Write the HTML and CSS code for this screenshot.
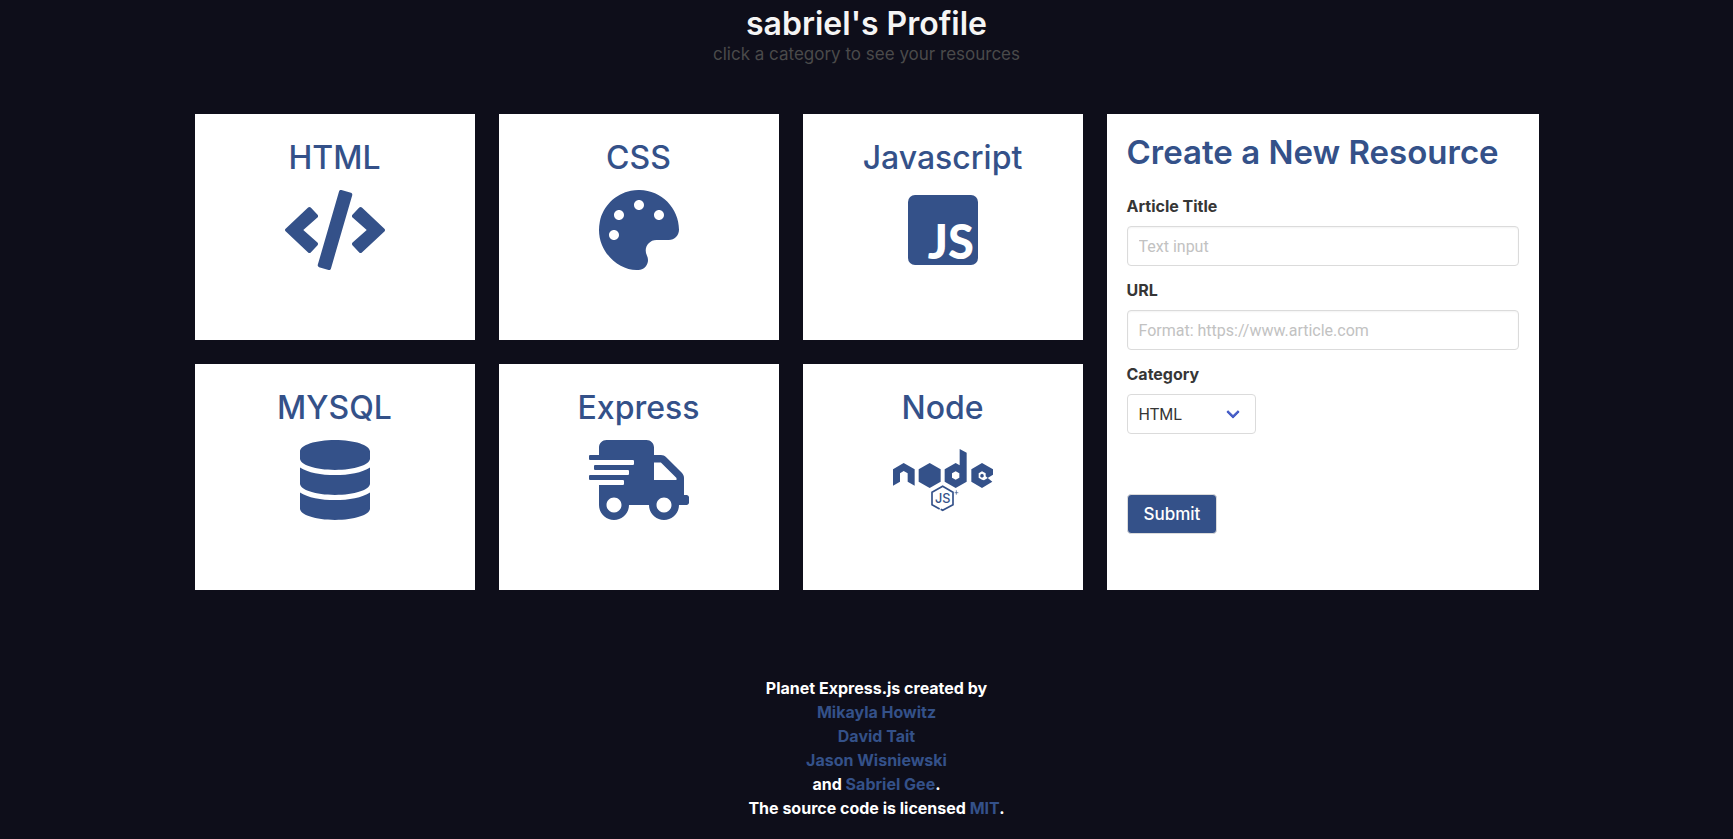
FILE: index.html
```html
<!DOCTYPE html>
<html lang="en">
<head>
<meta charset="utf-8">
<meta name="viewport" content="width=device-width, initial-scale=1">
<title>sabriel's Profile</title>
<link rel="stylesheet" href="styles.css">
</head>
<body>
<header class="hero">
  <h1 class="hero-title">sabriel's Profile</h1>
  <p class="hero-subtitle">click a category to see your resources</p>
</header>

<main class="board">
  <section class="categories">
    <a class="card" href="#html">
      <h2 class="card-title">HTML</h2>
      <svg class="icon" viewBox="0 0 640 512" aria-hidden="true"><path d="M278.9 511.500l-61-17.700c-6.400-1.800-10-8.500-8.200-14.900L346.200 8.700c1.800-6.400 8.500-10 14.900-8.200l61 17.700c6.400 1.800 10 8.500 8.200 14.900L293.800 503.300c-1.900 6.400-8.500 10.100-14.900 8.200zm-114-112.200l43.500-46.400c4.600-4.900 4.300-12.700-.8-17.200L117 256l90.600-79.700c5.100-4.500 5.500-12.300.8-17.200l-43.500-46.400c-4.500-4.800-12.100-5.100-17-.5L3.800 247.200c-5.100 4.700-5.100 12.800 0 17.500l144.100 135.100c4.900 4.600 12.500 4.400 17-.5zm327.200.6l144.100-135.100c5.100-4.700 5.100-12.800 0-17.500L492.100 112.100c-4.800-4.500-12.400-4.300-17 .5L431.600 159c-4.600 4.900-4.300 12.700.8 17.200L523 256l-90.600 79.700c-5.100 4.500-5.500 12.300-.8 17.200l43.500 46.400c4.500 4.900 12.100 5.100 17 .6z"/></svg>
    </a>
    <a class="card" href="#css">
      <h2 class="card-title">CSS</h2>
      <svg class="icon" viewBox="0 0 512 512" aria-hidden="true"><path d="M204.300 5C104.900 24.400 24.800 104.300 5.200 203.400c-37 187 131.700 326.400 258.800 306.700 41.200-6.400 61.400-54.600 42.500-91.700-23.100-45.400 9.900-98.400 60.900-98.400h79.700c35.800 0 64.800-29.600 64.900-65.300C511.500 97.100 368.100-26.900 204.300 5zM96 320c-17.700 0-32-14.300-32-32s14.300-32 32-32 32 14.300 32 32-14.300 32-32 32zm32-128c-17.700 0-32-14.300-32-32s14.300-32 32-32 32 14.300 32 32-14.300 32-32 32zm128-64c-17.700 0-32-14.300-32-32s14.300-32 32-32 32 14.300 32 32-14.300 32-32 32zm128 64c-17.700 0-32-14.300-32-32s14.300-32 32-32 32 14.300 32 32-14.300 32-32 32z"/></svg>
    </a>
    <a class="card" href="#javascript">
      <h2 class="card-title">Javascript</h2>
      <svg class="icon" viewBox="0 0 70 80" aria-hidden="true"><rect y="5" width="70" height="70" rx="7"/><text class="js-mark" x="66" y="69" text-anchor="end">JS</text></svg>
    </a>
    <a class="card" href="#mysql">
      <h2 class="card-title">MYSQL</h2>
      <svg class="icon" viewBox="0 0 448 512" aria-hidden="true"><path d="M448 73.143v45.714C448 159.143 347.667 192 224 192S0 159.143 0 118.857V73.143C0 32.857 100.333 0 224 0s224 32.857 224 73.143zM448 176v102.857C448 319.143 347.667 352 224 352S0 319.143 0 278.857V176c48.125 33.143 136.208 48.572 224 48.572S399.874 209.143 448 176zm0 160v102.857C448 479.143 347.667 512 224 512S0 479.143 0 438.857V336c48.125 33.143 136.208 48.572 224 48.572S399.874 369.143 448 336z"/></svg>
    </a>
    <a class="card" href="#express">
      <h2 class="card-title">Express</h2>
      <svg class="icon" viewBox="0 0 640 512" aria-hidden="true"><path d="M624 352h-16V243.900c0-12.700-5.100-24.900-14.100-33.900L494 110.100c-9-9-21.200-14.100-33.900-14.100H416V48c0-26.500-21.500-48-48-48H112C85.500 0 64 21.500 64 48v48H8c-4.400 0-8 3.600-8 8v16c0 4.400 3.600 8 8 8h272c4.400 0 8 3.600 8 8v16c0 4.400-3.600 8-8 8H40c-4.400 0-8 3.600-8 8v16c0 4.400 3.600 8 8 8h208c4.400 0 8 3.600 8 8v16c0 4.400-3.600 8-8 8H8c-4.400 0-8 3.600-8 8v16c0 4.400 3.600 8 8 8h208c4.400 0 8 3.600 8 8v16c0 4.400-3.600 8-8 8H64v128c0 53 43 96 96 96s96-43 96-96h128c0 53 43 96 96 96s96-43 96-96h48c8.800 0 16-7.200 16-16v-32c0-8.800-7.200-16-16-16zM160 464c-26.500 0-48-21.500-48-48s21.500-48 48-48 48 21.500 48 48-21.500 48-48 48zm320 0c-26.500 0-48-21.500-48-48s21.500-48 48-48 48 21.500 48 48-21.500 48-48 48zm80-208H416V144h44.100l99.900 99.900V256z"/></svg>
    </a>
    <a class="card" href="#node">
      <h2 class="card-title">Node</h2>
      <svg class="icon" viewBox="0 0 300 240" aria-hidden="true">
        <path d="M0 88 32 69 65 88V137L44 125V100L32 93 21 100V125L0 137Z"/>
        <path d="M110 69 143 88V125L110 144 77 125V88Z"/>
        <path fill-rule="evenodd" d="M200 27 221 38V125L188 144 155 125V88L188 69 200 76ZM188 94 177 100V113L188 119 199 113V100Z"/>
        <path fill-rule="evenodd" d="M267 69 300 88V104L273 121 267 119 257 113V100L267 94 278 100V109L298 125 267 144 235 125V88ZM267 101 262 104V110L267 113 272 110V104Z"/>
        <path class="hex-outline" d="M140 207 117 194V157L149 139 180 157V194L149 211 143 208"/>
        <path class="spark" d="M190 151V164M185 158H196"/>
        <text class="node-js" x="149" y="189" text-anchor="middle">JS</text>
      </svg>
    </a>
  </section>

  <form class="panel">
    <h2 class="panel-title">Create a New Resource</h2>
    <div class="field">
      <label class="label" for="title">Article Title</label>
      <input class="input" id="title" type="text" placeholder="Text input">
    </div>
    <div class="field">
      <label class="label" for="url">URL</label>
      <input class="input" id="url" type="text" placeholder="Format: https://www.article.com">
    </div>
    <div class="field">
      <label class="label" for="category">Category</label>
      <div class="select">
        <select id="category">
          <option>HTML</option>
          <option>CSS</option>
          <option>Javascript</option>
          <option>MYSQL</option>
          <option>Express</option>
          <option>Node</option>
        </select>
      </div>
    </div>
    <button class="button" type="submit">Submit</button>
  </form>
</main>

<footer class="footer">
  <p>Planet Express.js created by</p>
  <p><a href="#mikayla">Mikayla Howitz</a></p>
  <p><a href="#david">David Tait</a></p>
  <p><a href="#jason">Jason Wisniewski</a></p>
  <p>and <a href="#sabriel">Sabriel Gee</a>.</p>
  <p>The source code is licensed <a href="#license">MIT</a>.</p>
</footer>
</body>
</html>
```

FILE: styles.css
```css
:root {
  --blue: #345189;
  --night: #0e0e1a;
  --ink: #363636;
  --line: #dbdbdb;
}

*,
*::after { box-sizing: border-box; }

body {
  margin: 0;
  background: var(--night);
  font-family: Inter, "Open Sans", sans-serif;
  font-size: 16px;
  line-height: 24px;
}

h1, h2, p { margin: 0; }

a { color: var(--blue); text-decoration: none; }

.hero {
  padding: 6px 20px 0;
  text-align: center;
}

.hero-title {
  color: #f5f5f5;
  font-size: 32px;
  font-weight: 600;
  line-height: 36px;
}

.hero-subtitle {
  color: #4a4a4a;
  font-size: 17px;
}

.board {
  display: grid;
  grid-template-columns: 888fr 432fr;
  gap: 24px;
  max-width: 1344px;
  margin: 48px auto 0;
}

.categories {
  display: grid;
  grid-template-columns: repeat(3, 1fr);
  gap: 24px;
}

.card {
  display: flex;
  flex-direction: column;
  align-items: center;
  gap: 14px;
  min-height: 226px;
  padding: 26px 20px;
  background: #fff;
}

.card-title {
  font-size: 32px;
  font-weight: 500;
  line-height: 36px;
}

.icon {
  height: 80px;
  fill: var(--blue);
}

.js-mark {
  fill: #fff;
  font: 900 47px Lato, sans-serif;
}

.hex-outline,
.spark {
  fill: none;
  stroke: var(--blue);
  stroke-width: 5;
}

.spark { stroke-width: 2; }

.node-js { font: 500 38px Inter, sans-serif; }

.panel {
  display: flex;
  flex-direction: column;
  align-items: flex-start;
  gap: 12px;
  padding: 20px;
  background: #fff;
}

.panel-title {
  margin-bottom: 12px;
  color: var(--blue);
  font-size: 33px;
  font-weight: 600;
  line-height: 36px;
}

.field {
  display: flex;
  flex-direction: column;
  align-items: flex-start;
  gap: 8px;
  width: 100%;
}

.label {
  color: var(--ink);
  font-weight: 700;
}

.input,
.select select {
  height: 40px;
  padding: 0 11px;
  border: 1px solid var(--line);
  border-radius: 4px;
  background: #fff;
  color: var(--ink);
  font-family: Roboto, sans-serif;
  font-size: 16px;
}

.input {
  width: 100%;
  box-shadow: inset 0 1px 2px rgba(10, 10, 10, 0.05);
}

.input::placeholder { color: #c2c2c2; opacity: 1; }

.select { position: relative; }

.select select {
  width: 129px;
  appearance: none;
}

.select::after {
  content: "";
  position: absolute;
  top: 13px;
  right: 18px;
  width: 10px;
  height: 10px;
  border: solid #485fc7;
  border-width: 0 3px 3px 0;
  border-radius: 1px;
  transform: rotate(45deg);
  pointer-events: none;
}

.button {
  height: 40px;
  margin-top: 48px;
  padding: 0 16px;
  border: 1px solid var(--line);
  border-radius: 4px;
  background: var(--blue);
  color: #fff;
  font: 500 17px Inter, sans-serif;
}

.footer {
  padding: 86px 0 18px 20px;
  color: #fff;
  font-weight: 700;
  text-align: center;
}
```
